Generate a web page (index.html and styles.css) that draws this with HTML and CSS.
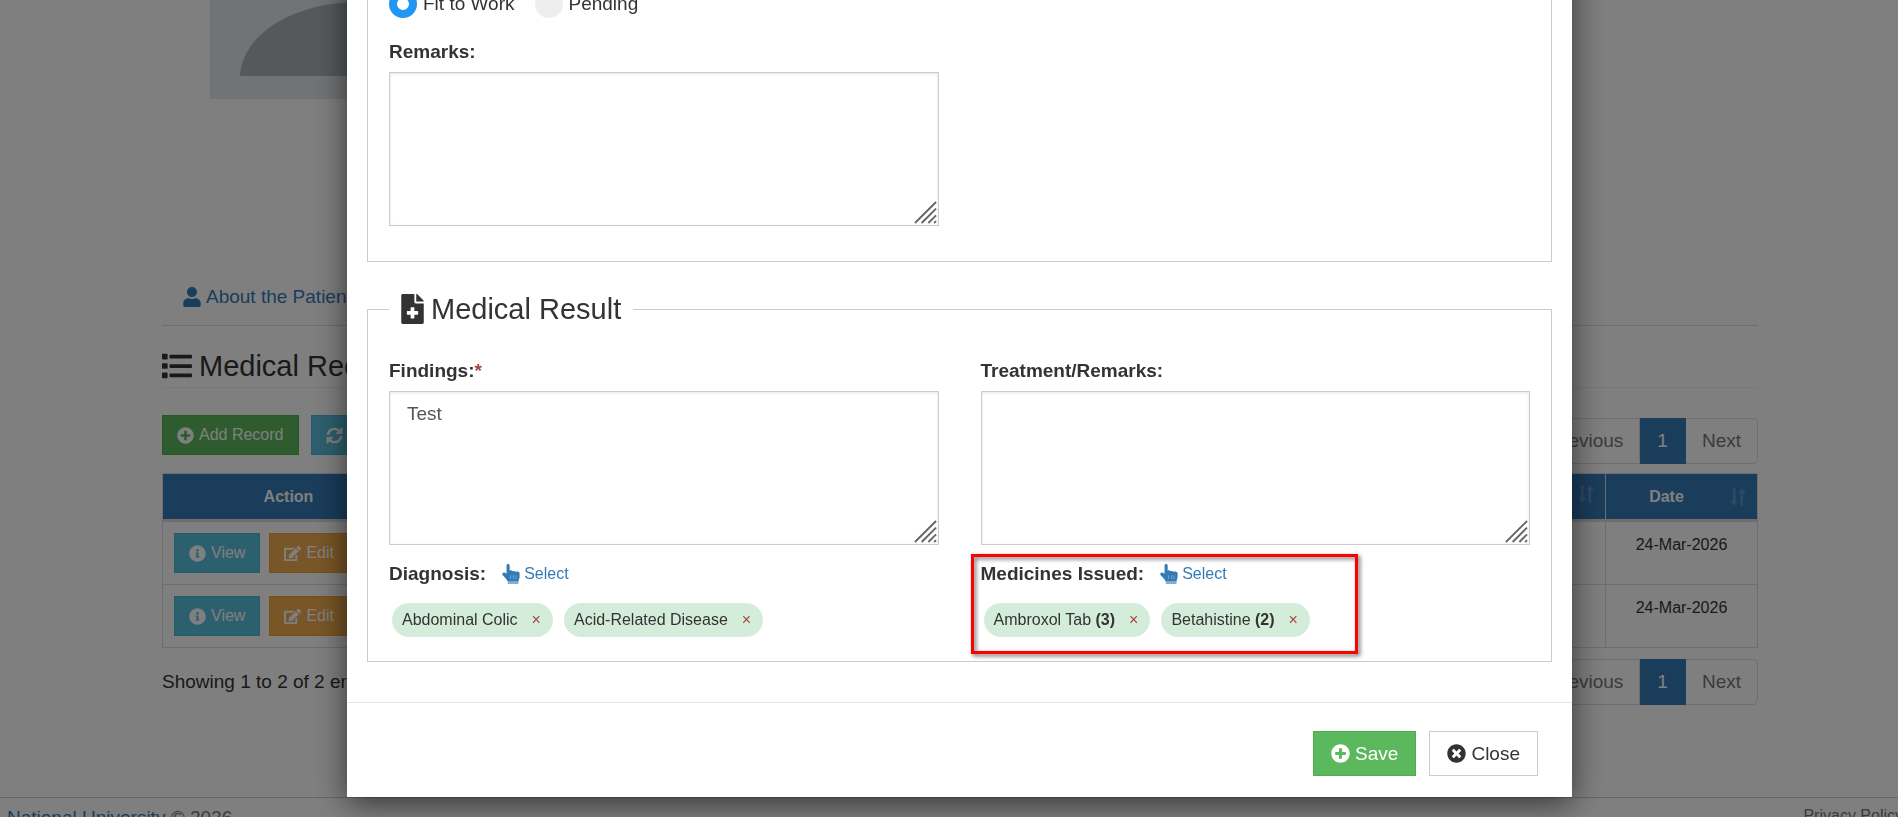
FILE: index.html
```html
<!DOCTYPE html>
<html lang="en">
<head>
<meta charset="utf-8">
<title>Medical Records</title>
<link rel="stylesheet" href="styles.css">
</head>
<body>
<svg class="sprite" aria-hidden="true">
  <symbol id="i-user" viewBox="0 0 448 512"><path d="M224 256c70.7 0 128-57.3 128-128S294.7 0 224 0 96 57.3 96 128s57.3 128 128 128zm89.6 32h-16.7c-22.2 10.2-46.9 16-72.9 16s-50.6-5.8-72.9-16h-16.7C60.2 288 0 348.2 0 422.4V464c0 26.5 21.5 48 48 48h352c26.5 0 48-21.5 48-48v-41.6c0-74.2-60.2-134.4-134.4-134.4z"/></symbol>
  <symbol id="i-list" viewBox="0 0 512 512"><path d="M16 48h64a16 16 0 0 1 16 16v64a16 16 0 0 1-16 16H16a16 16 0 0 1-16-16V64a16 16 0 0 1 16-16zm0 160h64a16 16 0 0 1 16 16v64a16 16 0 0 1-16 16H16a16 16 0 0 1-16-16v-64a16 16 0 0 1 16-16zm0 160h64a16 16 0 0 1 16 16v64a16 16 0 0 1-16 16H16a16 16 0 0 1-16-16v-64a16 16 0 0 1 16-16zM144 64h352a16 16 0 0 1 16 16v32a16 16 0 0 1-16 16H144a16 16 0 0 1-16-16V80a16 16 0 0 1 16-16zm0 160h352a16 16 0 0 1 16 16v32a16 16 0 0 1-16 16H144a16 16 0 0 1-16-16v-32a16 16 0 0 1 16-16zm0 160h352a16 16 0 0 1 16 16v32a16 16 0 0 1-16 16H144a16 16 0 0 1-16-16v-32a16 16 0 0 1 16-16z"/></symbol>
  <symbol id="i-plus" viewBox="0 0 512 512"><path d="M256 8C119 8 8 119 8 256s111 248 248 248 248-111 248-248S393 8 256 8zm144 276c0 6.600-5.400 12-12 12h-92v92c0 6.600-5.400 12-12 12h-56c-6.600 0-12-5.400-12-12v-92h-92c-6.600 0-12-5.400-12-12v-56c0-6.600 5.400-12 12-12h92v-92c0-6.600 5.400-12 12-12h56c6.600 0 12 5.400 12 12v92h92c6.600 0 12 5.400 12 12v56z"/></symbol>
  <symbol id="i-times" viewBox="0 0 512 512"><path d="M256 8C119 8 8 119 8 256s111 248 248 248 248-111 248-248S393 8 256 8zm121.600 313.100c4.700 4.700 4.700 12.300 0 17L338 377.600c-4.700 4.700-12.300 4.700-17 0L256 312l-65.100 65.600c-4.700 4.700-12.300 4.700-17 0L134.400 338c-4.700-4.700-4.700-12.300 0-17l65.600-65-65.600-65.100c-4.700-4.700-4.700-12.300 0-17l39.600-39.600c4.700-4.700 12.300-4.700 17 0l65 65.700 65.100-65.600c4.700-4.700 12.300-4.700 17 0l39.600 39.600c4.700 4.700 4.700 12.300 0 17L312 256l65.600 65.100z"/></symbol>
  <symbol id="i-info" viewBox="0 0 512 512"><path d="M256 8C119.043 8 8 119.083 8 256c0 136.997 111.043 248 248 248s248-111.003 248-248C504 119.083 392.957 8 256 8zm0 110c23.196 0 42 18.804 42 42s-18.804 42-42 42-42-18.804-42-42 18.804-42 42-42zm56 254c0 6.627-5.373 12-12 12h-88c-6.627 0-12-5.373-12-12v-24c0-6.627 5.373-12 12-12h12v-64h-12c-6.627 0-12-5.373-12-12v-24c0-6.627 5.373-12 12-12h64c6.627 0 12 5.373 12 12v100h12c6.627 0 12 5.373 12 12v24z"/></symbol>
  <symbol id="i-edit" viewBox="0 0 576 512"><path d="M402.600 83.200l90.200 90.200c3.800 3.800 3.800 10 0 13.800L274.400 405.600l-92.800 10.300c-12.400 1.400-22.900-9.100-21.500-21.500l10.300-92.800L388.800 83.200c3.800-3.800 10-3.800 13.800 0zm162-22.900l-48.800-48.800c-15.200-15.200-39.900-15.200-55.200 0l-35.400 35.400c-3.800 3.800-3.800 10 0 13.800l90.200 90.200c3.800 3.800 10 3.800 13.800 0l35.400-35.400c15.200-15.300 15.200-40 0-55.200zM384 346.200V448H64V128h229.800c3.200 0 6.200-1.300 8.500-3.500l40-40c7.600-7.600 2.200-20.500-8.500-20.500H48C21.500 64 0 85.500 0 112v352c0 26.500 21.500 48 48 48h352c26.500 0 48-21.500 48-48V306.200c0-10.700-12.900-16-20.500-8.500l-40 40c-2.200 2.300-3.500 5.300-3.500 8.500z"/></symbol>
  <symbol id="i-sync" viewBox="0 0 512 512"><path d="M20 236C30 110 130 20 256 20c66 0 120 24 160 62l38-60c6-8 38-8 42 4v170c0 8-4 12-12 12H316c-14 0-16-20-10-28l52-52c-28-24-62-38-102-38-80 0-144 58-154 134-1 6-6 12-14 12H32c-8 0-12-6-12-12zM492 276c-10 126-110 216-236 216-66 0-120-24-160-62l-38 60c-6 8-38 8-42-4V316c0-8 4-12 12-12h168c14 0 16 20 10 28l-52 52c28 24 62 38 102 38 80 0 144-58 154-134 1-6 6-12 14-12h56c8 0 12 6 12 12z"/></symbol>
  <symbol id="i-file" viewBox="0 0 384 512"><path d="M377 105L279.100 7c-4.500-4.500-10.600-7-17-7H256v128h128v-6.100c0-6.300-2.500-12.400-7-16.900zm-153 31V0H24C10.700 0 0 10.700 0 24v464c0 13.300 10.700 24 24 24h336c13.300 0 24-10.700 24-24V160H248c-13.200 0-24-10.800-24-24zm64 160v48c0 4.400-3.600 8-8 8h-56v56c0 4.400-3.600 8-8 8h-48c-4.400 0-8-3.600-8-8v-56h-56c-4.400 0-8-3.600-8-8v-48c0-4.400 3.600-8 8-8h56v-56c0-4.400 3.600-8 8-8h48c4.400 0 8 3.600 8 8v56h56c4.400 0 8 3.600 8 8z"/></symbol>
  <symbol id="i-hand" viewBox="0 0 448 512"><path fill-rule="evenodd" d="M150 0c22 0 40 18 40 40v130c14-10 60-12 74 14 22-12 62-6 74 16 34-14 106-6 106 40v80c0 50-24 70-26 130H140C112 390 56 330 22 300 -2 278 -4 250 10 232c20-24 56-22 78 0l22 22V40c0-22 18-40 40-40zM204 288v96h8v-96zm72 0v96h8v-96zm72 0v96h8v-96z"/><path opacity=".6" d="M140 450h278v42a20 20 0 0 1-20 20H160a20 20 0 0 1-20-20z"/></symbol>
  <symbol id="i-sort" viewBox="0 0 512 512"><path d="M110 10h76v352h70L148 502 30 362h80zM326 502h76V150h80L364 10 256 150h70z"/></symbol>
</svg>

<div class="page">
  <main class="container">
    <svg class="photo" viewBox="0 0 300 300" role="img" aria-label="Patient photo"><rect width="300" height="300" fill="#e4e6e9"/><circle cx="150" cy="120" r="62" fill="#adb3b7"/><path d="M30 277c2-40 50-74 120-74s118 34 120 74z" fill="#adb3b7"/></svg>
    <nav class="tabs"><a href="#about"><svg class="icon"><use href="#i-user"/></svg>About the Patient</a></nav>
    <h2 class="heading"><svg class="icon"><use href="#i-list"/></svg>Medical Records</h2>
    <div class="toolbar">
      <div class="actions">
        <button class="btn btn-sm btn-success"><svg class="icon"><use href="#i-plus"/></svg>Add Record</button>
        <button class="btn btn-sm btn-info"><svg class="icon"><use href="#i-sync"/></svg>Refresh</button>
      </div>
      <nav class="pager"><a href="#p">Previous</a><a href="#1" class="current">1</a><a href="#n">Next</a></nav>
    </div>
    <table class="records">
      <colgroup><col class="col-action"><col><col class="col-date"></colgroup>
      <thead><tr>
        <th>Action</th>
        <th><div class="sortable"><span></span><svg class="icon"><use href="#i-sort"/></svg></div></th>
        <th><div class="sortable"><span>Date</span><svg class="icon"><use href="#i-sort"/></svg></div></th>
      </tr></thead>
      <tbody>
        <tr><td><div class="row-actions"><button class="btn btn-sm btn-info"><svg class="icon"><use href="#i-info"/></svg>View</button><button class="btn btn-sm btn-warning"><svg class="icon"><use href="#i-edit"/></svg>Edit</button></div></td><td></td><td>24-Mar-2026</td></tr>
        <tr><td><div class="row-actions"><button class="btn btn-sm btn-info"><svg class="icon"><use href="#i-info"/></svg>View</button><button class="btn btn-sm btn-warning"><svg class="icon"><use href="#i-edit"/></svg>Edit</button></div></td><td></td><td>24-Mar-2026</td></tr>
      </tbody>
    </table>
    <div class="table-foot">
      <p>Showing 1 to 2 of 2 entries</p>
      <nav class="pager"><a href="#p">Previous</a><a href="#1" class="current">1</a><a href="#n">Next</a></nav>
    </div>
  </main>
  <footer class="site-footer">
    <span><a href="#home">National University</a> © 2026</span>
    <span class="policy">Privacy Policy</span>
  </footer>
</div>

<div class="backdrop">
  <form class="modal" role="dialog" aria-label="Medical record">
    <div class="modal-body">
      <fieldset class="group">
        <div class="radios">
          <label><input type="radio" name="status" checked>Fit to Work</label>
          <label><input type="radio" name="status">Pending</label>
        </div>
        <div class="columns">
          <div class="field">
            <label class="label" for="remarks">Remarks:</label>
            <div class="area"><textarea id="remarks"></textarea><svg class="grip" viewBox="0 0 24 24"><path d="M1 23L23 1M8 23L23 8M15 23l8-8M21 23l2-2"/></svg></div>
          </div>
        </div>
      </fieldset>
      <fieldset class="group result">
        <legend><svg class="icon"><use href="#i-file"/></svg>Medical Result</legend>
        <div class="columns">
          <div class="field">
            <label class="label" for="findings">Findings:<span class="required">*</span></label>
            <div class="area"><textarea id="findings">Test</textarea><svg class="grip" viewBox="0 0 24 24"><path d="M1 23L23 1M8 23L23 8M15 23l8-8M21 23l2-2"/></svg></div>
          </div>
          <div class="field">
            <label class="label" for="treatment">Treatment/Remarks:</label>
            <div class="area"><textarea id="treatment"></textarea><svg class="grip" viewBox="0 0 24 24"><path d="M1 23L23 1M8 23L23 8M15 23l8-8M21 23l2-2"/></svg></div>
          </div>
          <div class="picker">
            <div class="picker-head"><strong>Diagnosis:</strong><a href="#diagnosis"><svg class="icon"><use href="#i-hand"/></svg>Select</a></div>
            <div class="tags">
              <span class="tag">Abdominal Colic<button type="button" aria-label="Remove">×</button></span>
              <span class="tag">Acid-Related Disease<button type="button" aria-label="Remove">×</button></span>
            </div>
          </div>
          <div class="picker marked">
            <div class="picker-head"><strong>Medicines Issued:</strong><a href="#medicines"><svg class="icon"><use href="#i-hand"/></svg>Select</a></div>
            <div class="tags">
              <span class="tag"><span>Ambroxol Tab <b>(3)</b></span><button type="button" aria-label="Remove">×</button></span>
              <span class="tag"><span>Betahistine <b>(2)</b></span><button type="button" aria-label="Remove">×</button></span>
            </div>
          </div>
        </div>
      </fieldset>
    </div>
    <div class="modal-footer">
      <button type="button" class="btn btn-success"><svg class="icon"><use href="#i-plus"/></svg>Save</button>
      <button type="button" class="btn btn-default"><svg class="icon"><use href="#i-times"/></svg>Close</button>
    </div>
  </form>
</div>
</body>
</html>
```
FILE: styles.css
```css
*, *::before, *::after { box-sizing: border-box; }

:root {
  --gutter: 21px;
  --blue: #337ab7;
  --line: #ddd;
}

html { height: 100%; overflow: hidden; }

body {
  margin: 0;
  height: 100%;
  overflow: hidden;
  background: #fff;
  color: #333;
  font: 19px/26px "Liberation Sans", Arial, sans-serif;
}

a { color: var(--blue); text-decoration: none; }
button, textarea { font-family: inherit; }
.sprite { position: absolute; width: 0; height: 0; }
.icon { flex: none; width: 16px; height: 16px; fill: currentColor; }

/* Page behind the dialog */
.page { margin-right: calc(-1 * var(--gutter)); }

.container { margin: 0 161px 0 162px; }

.photo {
  display: block;
  width: 300px;
  height: 300px;
  margin: -201px 0 0 48px;
}

.tabs {
  display: flex;
  margin-top: 171px;
  padding: 14px 21px 15px;
  border-bottom: 1px solid var(--line);
}
.tabs a { display: flex; align-items: center; gap: 5px; }
.tabs .icon { width: 18px; height: 20px; }

.heading {
  display: flex;
  align-items: center;
  gap: 7px;
  margin: 23px 0 0;
  padding-bottom: 4px;
  border-bottom: 1px solid #eee;
  font-size: 29px;
  font-weight: 400;
  line-height: 34px;
}
.heading .icon { width: 30px; height: 30px; }

.btn {
  display: inline-flex;
  align-items: center;
  justify-content: center;
  gap: 5px;
  padding: 9px 17px;
  border: 1px solid transparent;
  color: #fff;
  font-size: 19px;
  line-height: 25px;
}
.btn .icon { width: 19px; height: 19px; }
.btn-sm { padding: 8px 14px; font-size: 16px; line-height: 22px; }
.btn-sm .icon { width: 17px; height: 17px; }
.btn-success { background: #5cb85c; border-color: #4cae4c; }
.btn-info { background: #5bc0de; border-color: #46b8da; }
.btn-warning { background: #f0ad4e; border-color: #eea236; }
.btn-default { background: #fff; border-color: #ccc; color: #333; }

.toolbar {
  display: flex;
  justify-content: space-between;
  align-items: flex-start;
  padding-top: 27px;
}
.actions { display: flex; gap: 12px; }
.toolbar .pager { margin-top: 3px; }

.pager { display: flex; }
.pager a {
  padding: 9px 16px;
  border: 1px solid var(--line);
  border-left-width: 0;
  color: #777;
  line-height: 26px;
}
.pager a:first-child { border-left-width: 1px; border-radius: 5px 0 0 5px; }
.pager a:last-child { border-radius: 0 5px 5px 0; }
.pager a.current { padding: 9px 17px; background: var(--blue); border-color: var(--blue); color: #fff; }

.records {
  width: 100%;
  margin-top: 9px;
  border-collapse: collapse;
  table-layout: fixed;
  font-size: 16px;
  line-height: 23px;
}
.col-action { width: 252px; }
.col-date { width: 152px; }
.records th, .records td { border: 1px solid var(--line); text-align: center; vertical-align: top; }
.records th { padding: 11px 10px; border-bottom-width: 3px; background: var(--blue); color: #fff; }
.records td { padding: 11px; }
.sortable { display: flex; align-items: center; gap: 12px; }
.sortable span { flex: 1; }
.sortable .icon { width: 18px; height: 18px; opacity: .2; }
.row-actions { display: flex; gap: 9px; }

.table-foot {
  display: flex;
  justify-content: space-between;
  align-items: flex-start;
  padding-top: 11px;
}
.table-foot p { margin: 10px 0 0; }

.site-footer {
  display: flex;
  justify-content: space-between;
  margin-top: 92px;
  padding: 7px 16px 7px 7px;
  border-top: 1px solid #ccc;
  color: #777;
}
.policy { font-size: 16px; line-height: 22px; }

/* Dialog */
.backdrop {
  position: fixed;
  inset: 0 calc(-1 * var(--gutter)) 0 0;
  display: flex;
  justify-content: center;
  align-items: flex-end;
  padding: 0 347px 20px;
  background: rgba(0, 0, 0, .5);
}

.modal {
  flex: 1;
  background: #fff;
  box-shadow: 0 6px 30px rgba(0, 0, 0, .6);
}

.modal-body { padding: 20px 20px 40px; }

.group {
  min-width: 0;
  margin: 0;
  padding: 24px 21px 35px;
  border: 1px solid #ccc;
}

.radios { display: flex; gap: 20px; margin-bottom: 21px; }
.radios label { display: flex; align-items: center; gap: 6px; }
.radios input {
  appearance: none;
  width: 28px;
  height: 28px;
  margin: 0;
  border-radius: 50%;
  background: #eee;
}
.radios input:checked { border: 8px solid #2196f3; background: #fff; }

.columns { display: grid; grid-template-columns: 1fr 1fr; column-gap: 42px; }
.label { display: block; margin-bottom: 7px; font-weight: 700; }
.required { color: #a94442; }

.area { position: relative; }
.area textarea {
  display: block;
  width: 100%;
  height: 154px;
  padding: 8px 17px;
  border: 1px solid #ccc;
  border-radius: 0;
  outline: 0;
  resize: none;
  background: #fff;
  color: #555;
  font-size: 19px;
  line-height: 27px;
  box-shadow: inset 0 1px 3px rgba(0, 0, 0, .1);
}
.grip {
  position: absolute;
  right: 2px;
  bottom: 2px;
  width: 23px;
  height: 23px;
  fill: none;
  stroke: #666;
  stroke-width: 2;
}

.result { margin-top: 27px; padding: 29px 21px 24px; }
.result legend {
  display: flex;
  align-items: center;
  gap: 7px;
  padding: 0 12px;
  font-size: 29px;
  line-height: 40px;
}
.result legend .icon { width: 23px; height: 30px; }

.picker { position: relative; padding-top: 16px; }
.picker-head { display: flex; align-items: center; gap: 16px; }
.picker-head a { display: flex; align-items: center; gap: 4px; font-size: 16px; }
.picker-head .icon { width: 18px; height: 20px; }

.tags { display: flex; gap: 11px; padding: 16px 3px 0; }
.tag {
  display: flex;
  align-items: center;
  gap: 12px;
  padding: 4px 10px;
  border-radius: 17px;
  background: #d4edda;
  font-size: 16px;
}
.tag button {
  padding: 0 2px;
  border: 0;
  background: none;
  color: #a94442;
  font-size: 16px;
  line-height: 26px;
}

.marked::after {
  content: "";
  position: absolute;
  top: 9px;
  left: -10px;
  width: 387px;
  height: 100px;
  border: 3px solid #f00;
  filter: drop-shadow(2px 2px 2px rgba(0, 0, 0, .6));
}

.modal-footer {
  display: flex;
  justify-content: flex-end;
  gap: 13px;
  padding: 28px 34px 21px;
  border-top: 1px solid #e5e5e5;
}
```
